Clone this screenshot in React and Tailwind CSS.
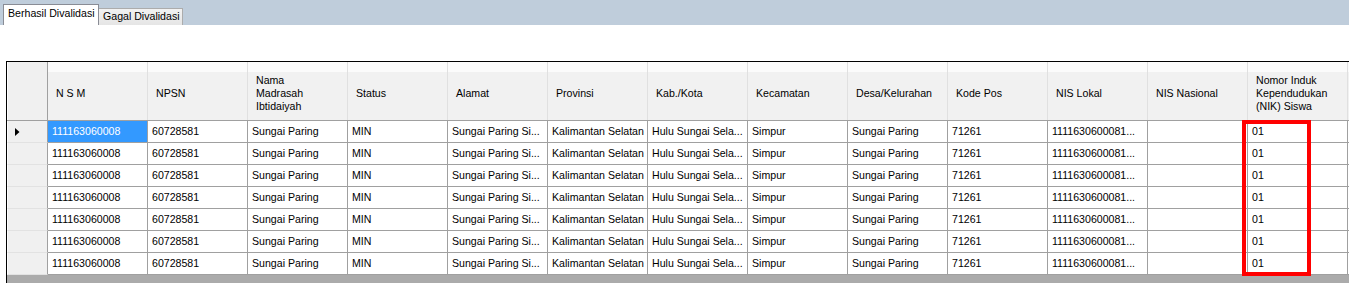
import React from "react";

const headers = [
  ["N S M"],
  ["NPSN"],
  ["Nama", "Madrasah", "Ibtidaiyah"],
  ["Status"],
  ["Alamat"],
  ["Provinsi"],
  ["Kab./Kota"],
  ["Kecamatan"],
  ["Desa/Kelurahan"],
  ["Kode Pos"],
  ["NIS Lokal"],
  ["NIS Nasional"],
  ["Nomor Induk", "Kependudukan", "(NIK) Siswa"],
];

const rowData = [
  "111163060008",
  "60728581",
  "Sungai Paring",
  "MIN",
  "Sungai Paring Si...",
  "Kalimantan Selatan",
  "Hulu Sungai Sela...",
  "Simpur",
  "Sungai Paring",
  "71261",
  "1111630600081...",
  "",
  "01",
];

const rows = Array.from({ length: 7 }, () => rowData);

export default function App() {
  return (
    <div
      className="relative w-[1349px] h-[283px] overflow-hidden bg-white text-[10.6px] text-black"
      style={{ fontFamily: '"Liberation Sans", Arial, sans-serif' }}
    >
      {/* Tab strip */}
      <div className="h-[25px] bg-[#bfcddb] flex items-end pl-[3px]">
        <div className="h-[21px] w-[96px] bg-white border-l border-t border-r border-[#898c95] flex items-center pl-[4px] pb-[2px] whitespace-nowrap relative z-10">
          Berhasil Divalidasi
        </div>
        <div className="h-[17px] w-[84px] bg-[linear-gradient(to_bottom,#f2f2f2,#e5e5e5)] border-t border-r border-[#acacac] flex items-center pl-[4px] whitespace-nowrap">
          Gagal Divalidasi
        </div>
      </div>

      {/* Spacer */}
      <div className="h-[36px]" />

      {/* Grid */}
      <div className="ml-[6px] h-[222px] border-l border-t border-black bg-[#ababab] flex flex-col">
        {/* Header row */}
        <div className="flex h-[59px] border-b border-[#a0a0a0] shrink-0">
          <div className="w-[41px] shrink-0 bg-[#f0f0f0] border-l border-white border-r border-r-[#a0a0a0]" />
          {headers.map((h, i) => (
            <div
              key={i}
              className="w-[100px] shrink-0 border-r border-[#e0e0e0] bg-[linear-gradient(to_bottom,#fbfbfb_0px,#fbfbfb_10px,#f1f1f1_10px)] flex flex-col justify-center pl-[8px] pt-[5px] leading-[13px]"
            >
              {h.map((l, j) => (
                <div key={j} className="whitespace-nowrap">
                  {l}
                </div>
              ))}
            </div>
          ))}
          <div className="w-[100px] shrink-0 bg-[linear-gradient(to_bottom,#fbfbfb_0px,#fbfbfb_10px,#f1f1f1_10px)]" />
        </div>

        {/* Data rows */}
        {rows.map((r, ri) => (
          <div key={ri} className="flex h-[22px] shrink-0">
            <div className="w-[41px] shrink-0 bg-[#f0f0f0] border-l border-white border-b border-b-[#e2e2e2] border-r border-r-[#a0a0a0] flex items-center pl-[7px]">
              {ri === 0 && (
                <svg width="5" height="8" viewBox="0 0 5 8">
                  <path d="M0 0 L4.5 4 L0 8 Z" fill="#000" />
                </svg>
              )}
            </div>
            {r.map((c, ci) => (
              <div
                key={ci}
                className={
                  ri === 0 && ci === 0
                    ? "w-[100px] shrink-0 border-r border-b border-[#a0a0a0] bg-[#3399ff] text-white flex items-center pl-[4px] whitespace-nowrap overflow-hidden"
                    : "w-[100px] shrink-0 border-r border-b border-[#a0a0a0] bg-white flex items-center pl-[4px] whitespace-nowrap overflow-hidden"
                }
              >
                {c}
              </div>
            ))}
            <div className="w-[100px] shrink-0 border-b border-[#a0a0a0] bg-white" />
          </div>
        ))}
      </div>

      {/* Red highlight box */}
      <div className="absolute left-[1242px] top-[120px] w-[69px] h-[156px] border-4 border-[#ff0000]" />
    </div>
  );
}
